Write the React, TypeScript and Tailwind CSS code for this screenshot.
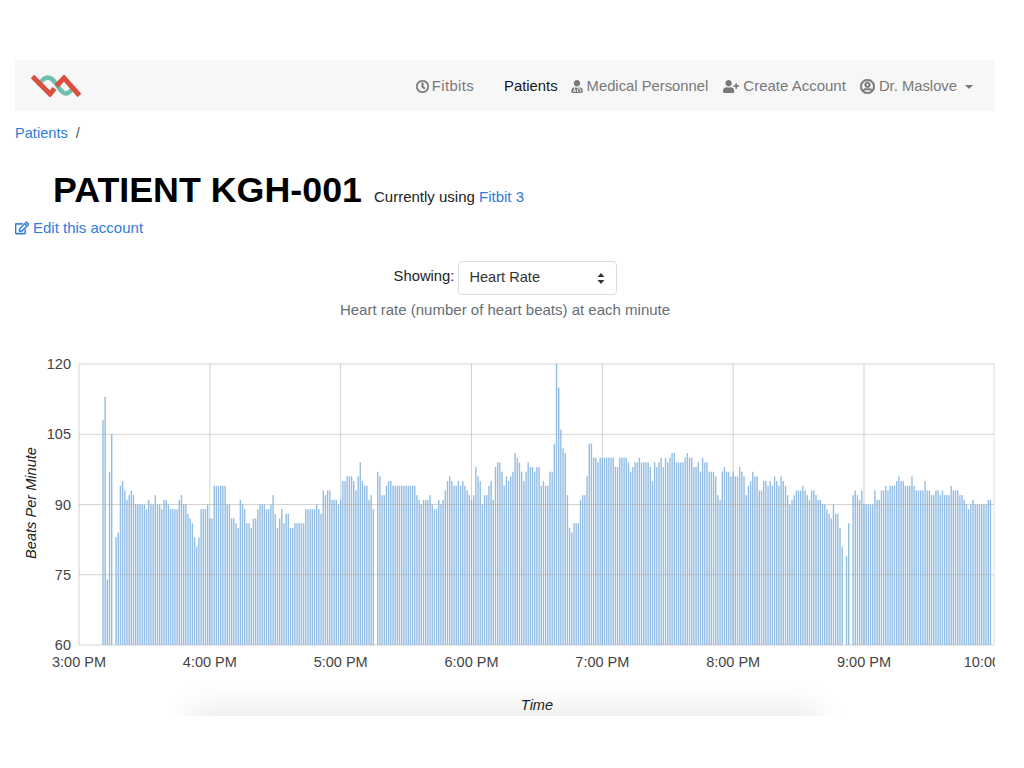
import React from "react";
import { FaRegClock, FaUserMd, FaUserPlus, FaRegUserCircle, FaRegEdit } from "react-icons/fa";

// one value per minute, starting at 3:11 PM (0 = no reading)
const heartRate = [
  108, 113, 74, 97, 105, 0, 83, 84, 94, 95, 93, 91, 92, 93, 92, 90, 90, 90, 90, 90, 89, 91, 90, 90, 92, 90, 90, 89, 91, 91, 90, 89, 89, 89, 89, 91, 92, 90, 90, 88, 87, 86, 83, 81, 83, 89, 89, 89, 90,
  87, 87, 94, 94, 94, 94, 94, 94, 90, 90, 87, 87, 86, 85, 91, 90, 89, 86, 86, 85, 87, 87, 89, 90, 90, 90, 89, 89, 90, 92, 88, 85, 87, 89, 86, 88, 88, 85, 85, 86, 86, 86, 86, 86, 89, 89, 89, 89, 89, 90, 89, 88, 93, 92, 93, 93, 91, 91, 91, 90,
  91, 95, 95, 96, 96, 96, 95, 93, 96, 99, 95, 94, 94, 91, 92, 89, 0, 97, 96, 92, 92, 94, 95, 95, 94, 94, 94, 94, 94, 94, 94, 94, 94, 94, 94, 92, 91, 90, 91, 91, 91, 92, 90, 89, 89, 91, 90, 91, 93, 95, 96, 95, 94, 94, 95, 94, 95, 94, 93, 92,
  91, 92, 98, 96, 95, 90, 92, 92, 94, 95, 91, 98, 99, 99, 97, 94, 96, 95, 96, 97, 101, 100, 99, 97, 95, 97, 99, 98, 98, 97, 98, 98, 94, 95, 94, 94, 97, 97, 103, 120, 115, 106, 102, 101, 92, 85, 84, 86, 86, 86, 91, 92, 92, 96, 103, 103, 100, 100, 99, 100,
  100, 100, 100, 100, 100, 100, 98, 98, 100, 100, 100, 100, 99, 97, 98, 99, 99, 100, 99, 99, 99, 99, 98, 95, 99, 98, 99, 100, 98, 100, 99, 100, 101, 101, 99, 99, 99, 99, 100, 101, 100, 100, 98, 98, 99, 97, 100, 99, 99, 97, 97, 97, 96, 92, 91, 97, 98, 97, 97, 96,
  97, 96, 96, 98, 97, 96, 92, 94, 95, 97, 96, 96, 93, 93, 95, 95, 94, 95, 94, 96, 95, 94, 96, 95, 94, 92, 90, 91, 92, 93, 93, 93, 94, 93, 92, 91, 93, 93, 92, 91, 91, 90, 90, 89, 88, 87, 90, 88, 88, 85, 81, 0, 79, 86, 0, 92, 93, 92, 91, 93,
  90, 90, 90, 90, 90, 93, 91, 91, 93, 93, 94, 93, 94, 94, 94, 95, 96, 95, 95, 94, 94, 94, 96, 94, 93, 93, 93, 93, 95, 93, 93, 92, 92, 93, 93, 92, 93, 92, 92, 92, 94, 93, 93, 93, 92, 92, 91, 90, 89, 90, 91, 90, 90, 90, 90, 90, 90, 91, 91,
];

const plotLeft = 79;
const plotRight = 994;
const plotTop = 364;
const plotBottom = 645;
const hourWidth = 130.83;
const minuteWidth = hourWidth / 60;

const yFor = (bpm: number) => plotBottom - ((bpm - 60) / 60) * (plotBottom - plotTop);

const hours = ["3:00 PM", "4:00 PM", "5:00 PM", "6:00 PM", "7:00 PM", "8:00 PM", "9:00 PM", "10:00 PM"];
const ticks = [60, 75, 90, 105, 120];

function Logo() {
  return (
    <svg width="54" height="22" viewBox="0 0 54 22" fill="none" className="-ml-[1px]">
      <path d="M9 10.5 C12 6 15 2.5 19 2.5 C25 2.5 28 12 33 16.5 C36 19.5 40 19.5 44 12.5" stroke="#6fbfae" strokeWidth="4.5" />
      <path d="M3.5 1.5 L21 19 L25.5 13.5" stroke="#d9503f" strokeWidth="5" />
      <path d="M27.5 11 L35 3 L50.5 20.5" stroke="#d9503f" strokeWidth="5" />
    </svg>
  );
}

function HeartRateChart() {
  return (
    <svg
      width="980"
      height="371"
      viewBox="15 345 980 371"
      className="block relative"
      style={{ fontFamily: '"Liberation Sans", Arial, sans-serif' }}
    >
      {hours.map((h, i) =>
        i < 7 ? (
          <line
            key={h}
            x1={plotLeft + hourWidth * i}
            x2={plotLeft + hourWidth * i}
            y1={plotTop}
            y2={plotBottom}
            stroke="#d2d2d2"
            strokeWidth="1"
          />
        ) : null
      )}
      <line x1={plotRight} x2={plotRight} y1={plotTop} y2={plotBottom} stroke="#dedede" strokeWidth="1" />

      {heartRate.map((bpm, i) =>
        bpm ? (
          <rect
            key={i}
            x={plotLeft + minuteWidth * (i + 11) - 0.7}
            y={yFor(bpm)}
            width="1.4"
            height={plotBottom - yFor(bpm)}
            fill="#74abdc"
            fillOpacity="0.78"
          />
        ) : null
      )}

      {ticks.map((t) => (
        <line key={t} x1={plotLeft} x2={plotRight} y1={yFor(t)} y2={yFor(t)} stroke="#a8a8a8" strokeOpacity="0.5" strokeWidth="1" />
      ))}

      {ticks.map((t) => (
        <text key={t} x={71} y={yFor(t) + 5} textAnchor="end" fontSize="14.5" fill="#444">
          {t}
        </text>
      ))}
      {hours.map((h, i) => (
        <text key={h} x={plotLeft + hourWidth * i} y={667} textAnchor="middle" fontSize="14.5" fill="#444">
          {h}
        </text>
      ))}
      <text
        x={36}
        y={503}
        textAnchor="middle"
        fontSize="14.6"
        fontStyle="italic"
        fill="#222"
        transform="rotate(-90 36 503)"
      >
        Beats Per Minute
      </text>
      <text x={537} y={710} textAnchor="middle" fontSize="14.6" fontStyle="italic" fill="#222">
        Time
      </text>
    </svg>
  );
}

export default function App() {
  return (
    <div className="bg-white w-[1024px] h-[768px] overflow-hidden pt-[60px] font-['Liberation_Sans',Arial,sans-serif]">
      <nav className="ml-[15px] w-[980px] h-[51px] bg-[#f7f7f7] flex items-center pl-[15px] pr-[22px] pt-[1px] text-[14.8px] text-[#787878]">
        <Logo />
        <div className="ml-auto flex items-center">
          <a className="flex items-center gap-[3px]">
            <FaRegClock className="w-[13px] h-[13px]" stroke="currentColor" strokeWidth={24} />
            <span className="tracking-[0.4px]">Fitbits</span>
          </a>
          <a className="ml-[30px] text-[#151515]">Patients</a>
          <a className="ml-[13px] flex items-center gap-[4px]">
            <FaUserMd className="w-[12px] h-[13px]" /> Medical Personnel
          </a>
          <a className="ml-[15px] flex items-center gap-[4px] text-[15px]">
            <FaUserPlus className="w-[16px] h-[13px]" /> Create Account
          </a>
          <a className="ml-[14px] flex items-center gap-[4px]">
            <FaRegUserCircle className="w-[15px] h-[15px]" stroke="currentColor" strokeWidth={24} /> Dr. Maslove
            <span className="ml-[4px] mt-[2px] border-x-[4.5px] border-t-[4px] border-x-transparent border-t-[#787878]" />
          </a>
        </div>
      </nav>

      <div className="mx-[15px] mt-[14px] h-[18px] flex items-center text-[14.6px] text-[#555]">
        <a className="text-[#2f7bd9]">Patients</a>
        <span className="ml-[8px]">/</span>
      </div>

      <div className="mt-[27px] ml-[53px] flex items-baseline h-[40px]">
        <h1 className="text-[35.8px] font-bold text-black leading-[40px]">PATIENT KGH-001</h1>
        <span className="ml-[12px] text-[15px] text-[#222]">
          Currently using <a className="text-[#2f7bd9]">Fitbit 3</a>
        </span>
      </div>

      <a className="mx-[15px] mt-[9px] flex items-center gap-[4px] h-[18px] text-[15px] text-[#2f7bd9]">
        <FaRegEdit className="w-[14px] h-[14px]" stroke="currentColor" strokeWidth={16} /> Edit this account
      </a>

      <div className="mt-[24px] flex justify-center items-center text-[14.8px] text-[#222] pr-[13px]">
        <span className="mb-[3px]">Showing:</span>
        <div className="ml-[4px] w-[159px] h-[34px] border border-[#dcdcdc] rounded-[4px] flex items-center justify-between pl-[10px] pr-[11px]">
          <span className="text-[#333] text-[14.6px]">Heart Rate</span>
          <svg width="8" height="11" viewBox="0 0 8 11" fill="#333">
            <path d="M4 0 L7.5 4 L0.5 4 Z M4 11 L0.5 7 L7.5 7 Z" />
          </svg>
        </div>
      </div>

      <p className="mt-[6px] text-center text-[15px] leading-[18px] text-[#666e75] pr-[14px]">
        Heart rate (number of heart beats) at each minute
      </p>

      <div className="relative mt-[26px] ml-[15px] w-[980px] h-[371px] overflow-hidden">
        <div className="absolute left-[185px] top-[371px] w-[610px] h-[40px] shadow-[0_0_32px_8px_rgba(0,0,0,0.09)]" />
        <HeartRateChart />
      </div>
    </div>
  );
}
